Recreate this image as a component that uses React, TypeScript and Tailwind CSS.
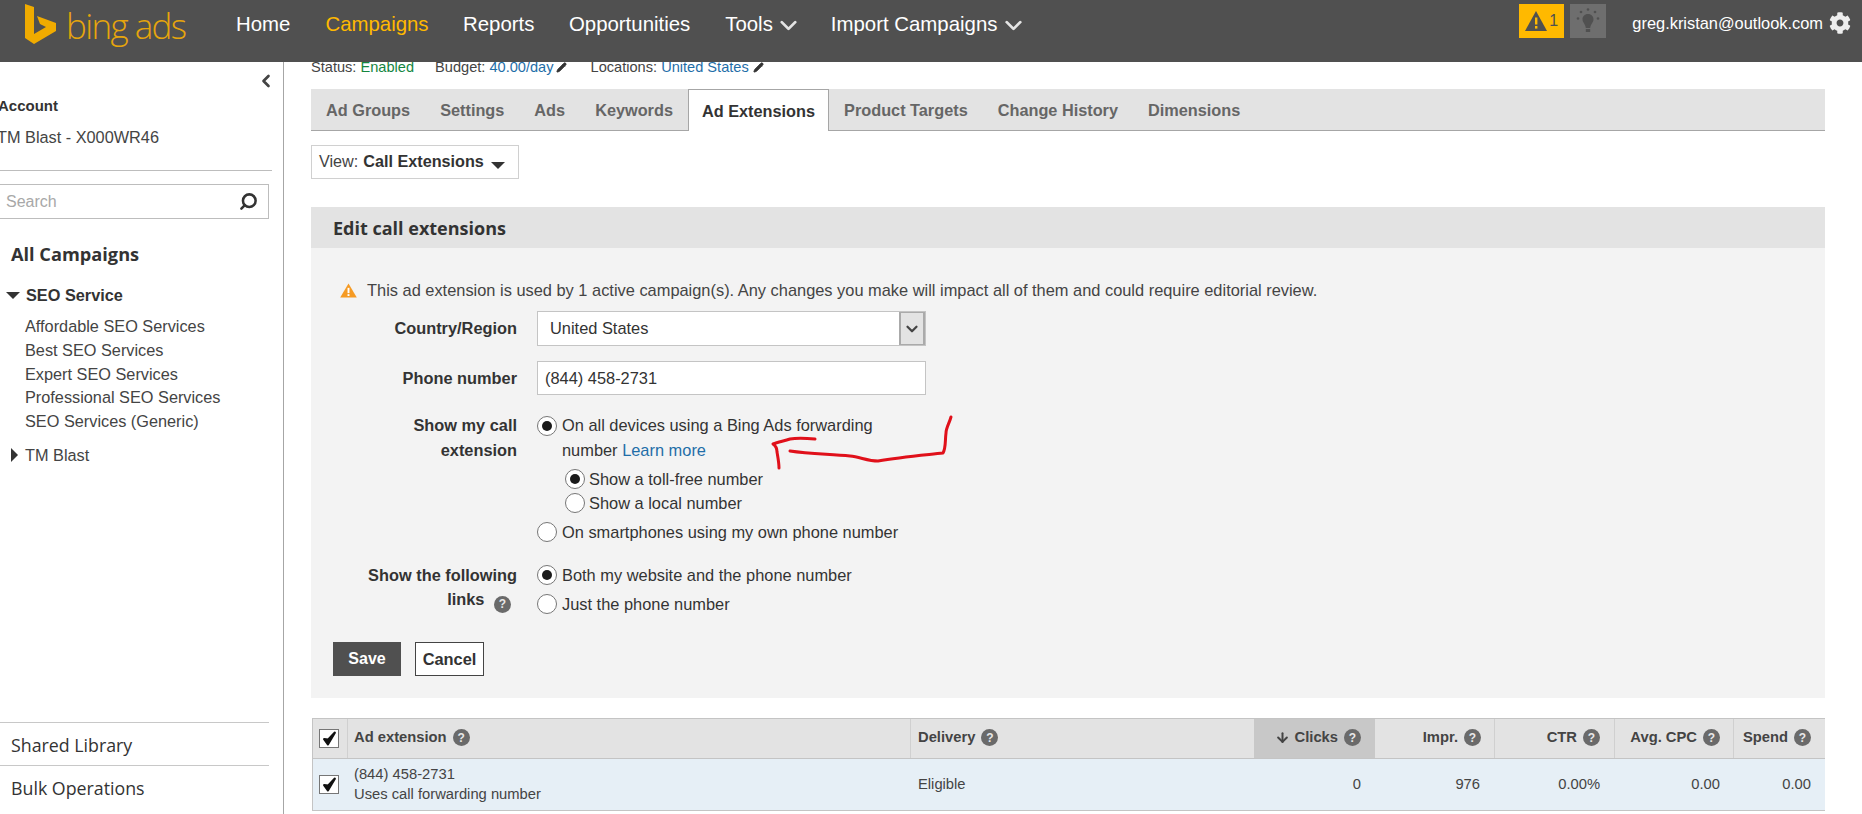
import React from "react";
import { ChevronDown, ChevronLeft, Pencil, Search, ArrowDown } from "lucide-react";
import { FaCog } from "react-icons/fa";

const Help = ({ className = "" }: { className?: string }) => (
  <span className={"inline-flex items-center justify-center w-[17px] h-[17px] rounded-full bg-[#6a6a6a] text-[#e8e8e8] text-[12px] font-bold leading-none " + className}>?</span>
);

const Radio = ({ on }: { on?: boolean }) => (
  <span className="shrink-0 w-[20px] h-[20px] rounded-full border border-[#767676] bg-white flex items-center justify-center">
    {on && <span className="w-[10px] h-[10px] rounded-full bg-[#1a1a1a]" />}
  </span>
);

const Check = () => (
  <span className="w-[20px] h-[19px] border border-[#767676] bg-white flex items-center justify-center">
    <svg width="15" height="15" viewBox="0 0 14 14"><path d="M2 7.5 L5.5 12.5 L12 1.5 L5.8 8 Z" fill="#111" stroke="#111" strokeWidth="2" strokeLinejoin="round" /></svg>
  </span>
);

const tabs = ["Ad Groups", "Settings", "Ads", "Keywords", "Ad Extensions", "Product Targets", "Change History", "Dimensions"];
const campaigns = ["Affordable SEO Services", "Best SEO Services", "Expert SEO Services", "Professional SEO Services", "SEO Services (Generic)"];

const Tri = () => <span className="inline-block w-0 h-0 border-x-[7px] border-x-transparent border-t-[7px] border-t-[#333]" />;

export default function App() {
  return (
    <div className="w-[1862px] h-[814px] overflow-hidden bg-white flex flex-col text-[#333] font-['Liberation_Sans',Arial,sans-serif]">
      {/* top bar */}
      <header className="h-[62px] shrink-0 bg-[#505050] flex items-start relative z-10">
        <div className="flex items-center h-[50px] pl-[24px] w-[236px]">
          <svg width="33" height="42" viewBox="0 0 33 42" className="shrink-0 -mt-[2px]">
            <path d="M1 1 L10 4 V31 L22 24 L16 21 L13 13 L32 20 V28 L10 41 L1 35 Z" fill="#f0ab00" />
          </svg>
          <span className="ml-[9px] text-[#e6a50c] text-[35px] leading-none font-['Open_Sans'] font-light tracking-[-1.6px]">bing ads</span>
        </div>
        <nav className="flex items-center h-[48px] text-[20.4px] text-white">
          <span>Home</span>
          <span className="ml-[35px] text-[#ffb900]">Campaigns</span>
          <span className="ml-[34.5px]">Reports</span>
          <span className="ml-[34.5px]">Opportunities</span>
          <span className="ml-[35px]">Tools</span>
          <ChevronDown className="ml-[2px] mt-[3px] w-[27px] h-[27px]" strokeWidth={2.5} color="#e4e4e4" />
          <span className="ml-[29px]">Import Campaigns</span>
          <ChevronDown className="ml-[3px] mt-[3px] w-[27px] h-[27px]" strokeWidth={2.5} color="#e4e4e4" />
        </nav>
        <div className="ml-auto flex items-start pt-[4px] pr-[11px]">
          <div className="w-[45px] h-[34px] bg-[#ffb900] flex items-center pl-[5px] text-[#505050] text-[16px]">
            <svg width="24" height="22" viewBox="0 0 24 22"><path d="M12 1 L23 21 H1 Z" fill="#505050" /><rect x="11" y="7.5" width="2.4" height="7" fill="#ffb900" /><rect x="11" y="16" width="2.4" height="2.6" fill="#ffb900" /></svg>
            <span className="ml-[1px]">1</span>
          </div>
          <div className="ml-[6px] w-[36px] h-[34px] bg-[#6e6e6e] flex items-center justify-center">
            <svg width="26" height="28" viewBox="0 0 26 28" fill="#505050">
              <path d="M13 7 C9.5 7 7.5 9.6 7.5 12.3 C7.5 15.5 10.3 17 10.8 21 H15.2 C15.7 17 18.5 15.5 18.5 12.3 C18.5 9.6 16.5 7 13 7 Z" />
              <rect x="10.8" y="22" width="4.4" height="3" />
              <circle cx="13" cy="2.5" r="1.3" /><circle cx="6" cy="5" r="1.3" /><circle cx="20" cy="5" r="1.3" /><circle cx="3" cy="11.5" r="1.3" /><circle cx="23" cy="11.5" r="1.3" />
            </svg>
          </div>
          <span className="ml-[26px] text-[16.4px] leading-[38px] h-[38px] -mt-[4px] pt-[4px] text-white whitespace-nowrap">greg.kristan@outlook.com</span>
          <FaCog className="ml-[6px] mt-[8px] w-[22px] h-[22px]" color="#eeeeee" />
        </div>
      </header>

      <div className="flex flex-1 min-h-0">
        {/* sidebar */}
        <aside className="w-[284px] shrink-0 border-r border-[#a6a6a6] flex flex-col overflow-hidden relative">
          <div className="h-[32px] flex justify-end items-center pr-[7px] pt-[6px]">
            <ChevronLeft className="w-[20px] h-[20px]" color="#444" strokeWidth={3.2} />
          </div>
          <div className="mt-[2px] -ml-[2px] text-[15px] font-bold leading-[20px]">Account</div>
          <div className="mt-[11px] -ml-[3px] text-[16.3px] leading-[20px] text-[#444]">TM Blast - X000WR46</div>
          <div className="mt-[23px] w-[272px] border-t border-[#bdbdbd]" />
          <div className="mt-[13px] -ml-[3px] w-[272px] h-[35px] border border-[#bdbdbd] flex items-center justify-between pl-[8px] pr-[10px]">
            <span className="text-[16px] text-[#a8a8a8]">Search</span>
            <Search className="w-[19px] h-[19px] -scale-x-100" color="#333" strokeWidth={3.2} />
          </div>
          <div className="mt-[23px] pl-[11px] text-[18.2px] leading-[24px] font-['Open_Sans'] font-bold">All Campaigns</div>
          <div className="mt-[17px] flex items-center pl-[6px] h-[24px]">
            <span className="inline-block w-0 h-0 border-x-[7px] border-x-transparent border-t-[7px] border-t-[#333]" />
            <span className="ml-[6px] text-[16.3px] font-bold">SEO Service</span>
          </div>
          <ul className="mt-[8px] pl-[25px] text-[16.3px] leading-[23.8px] text-[#444]">
            {campaigns.map((c) => <li key={c}>{c}</li>)}
          </ul>
          <div className="mt-[9px] flex items-center pl-[11px] h-[24px]">
            <span className="inline-block w-0 h-0 border-y-[7px] border-y-transparent border-l-[7px] border-l-[#333]" />
            <span className="ml-[7px] text-[16.3px] text-[#444]">TM Blast</span>
          </div>
          <div className="mt-auto w-[269px] font-['Open_Sans'] text-[17.8px] text-[#333]">
            <div className="h-[43px] border-t border-[#c8c8c8] pl-[11px] pt-[2px] flex items-center">Shared Library</div>
            <div className="h-[49px] border-t border-[#c8c8c8] pl-[11px] pb-[3px] flex items-center">Bulk Operations</div>
          </div>
        </aside>

        {/* main */}
        <main className="ml-[27px] w-[1514px] shrink-0 flex flex-col">
          <div className="h-[27px] overflow-hidden flex items-start text-[14.6px] leading-[10px] text-[#444]">
            <span>Status: <span className="text-[#14863f]">Enabled</span></span>
            <span className="ml-[21px]">Budget: <span className="text-[#1f6ea8]">40.00/day</span></span>
            <Pencil className="ml-[2px] w-[11px] h-[11px]" color="#333" fill="#333" />
            <span className="ml-[24px]">Locations: <span className="text-[#1f6ea8]">United States</span></span>
            <Pencil className="ml-[4px] w-[11px] h-[11px]" color="#333" fill="#333" />
          </div>

          <div className="h-[42px] shrink-0 bg-[#e3e3e3] border-b border-[#a6a6a6] flex items-stretch text-[16.3px] font-bold text-[#666]">
            {tabs.map((t) =>
              t === "Ad Extensions" ? (
                <span key={t} className="px-[13px] pt-[1px] h-[42px] bg-white text-[#333] border border-b-0 border-[#a6a6a6] flex items-center">{t}</span>
              ) : (
                <span key={t} className="px-[15px] pt-[1px] flex items-center">{t}</span>
              )
            )}
          </div>

          <div className="mt-[14px] w-[208px] h-[34px] border border-[#d0d0d0] flex items-center pl-[7px] pb-[1px] text-[16.2px]">
            <span className="text-[#444]">View:</span>
            <span className="ml-[5px] font-bold">Call Extensions</span>
            <span className="ml-[7px] mt-[4px]"><Tri /></span>
          </div>

          <div className="mt-[28px] h-[41px] bg-[#e3e3e3] flex items-center pl-[22px] pt-[1px] text-[18px] font-['Open_Sans'] font-bold">Edit call extensions</div>

          <section className="h-[450px] bg-[#f3f3f3] flex flex-col text-[16.4px] text-[#333]">
            <div className="mt-[32px] ml-[29px] flex items-center h-[20px]">
              <svg width="17" height="15" viewBox="0 0 16 14"><path d="M8 0.5 L15.8 13.5 H0.2 Z" fill="#f59a23" /><rect x="7.1" y="4.5" width="1.8" height="5" fill="#fff" /><rect x="7.1" y="10.4" width="1.8" height="1.8" fill="#fff" /></svg>
              <span className="ml-[10px] text-[#444]">This ad extension is used by 1 active campaign(s). Any changes you make will impact all of them and could require editorial review.</span>
            </div>

            <div className="mt-[11px] flex items-center h-[35px]">
              <span className="w-[206px] text-right font-bold text-[16.35px]">Country/Region</span>
              <div className="ml-[20px] w-[389px] h-[35px] border border-[#c4c4c4] bg-white flex items-center justify-between pl-[12px]">
                <span>United States</span>
                <span className="w-[26px] h-[33px] bg-[#e3e3e3] border-x-2 border-y border-[#aaa] flex items-center justify-center">
                  <ChevronDown className="w-[18px] h-[18px]" color="#444" strokeWidth={3} />
                </span>
              </div>
            </div>

            <div className="mt-[15px] flex items-center h-[34px]">
              <span className="w-[206px] text-right font-bold text-[16.35px] pt-[1px]">Phone number</span>
              <div className="ml-[20px] w-[389px] h-[34px] border border-[#c4c4c4] bg-white flex items-center pl-[7px] pt-[1px]">(844) 458-2731</div>
            </div>

            <div className="mt-[18px] flex">
              <div className="w-[206px] text-right font-bold text-[16.35px] leading-[24.5px]">Show my call<br />extension</div>
              <div className="ml-[20px]">
                <label className="flex items-start leading-[24.5px]">
                  <span className="mt-[3px]"><Radio on /></span>
                  <span className="ml-[5px]">On all devices using a Bing Ads forwarding<br />number <span className="text-[#1f6ea8]">Learn more</span></span>
                </label>
                <label className="mt-[5px] ml-[28px] flex items-center h-[24px]"><Radio on /><span className="ml-[4px]">Show a toll-free number</span></label>
                <label className="ml-[28px] flex items-center h-[24px]"><Radio /><span className="ml-[4px]">Show a local number</span></label>
                <label className="mt-[5px] flex items-center h-[24px]"><Radio /><span className="ml-[5px]">On smartphones using my own phone number</span></label>
              </div>
            </div>

            <div className="mt-[19px] flex">
              <div className="w-[206px] text-right font-bold text-[16.35px] leading-[24px]">
                Show the following<br />links <Help className="ml-[5px] mr-[6px] align-[-3px]" />
              </div>
              <div className="ml-[20px]">
                <label className="flex items-center h-[24px]"><Radio on /><span className="ml-[5px]">Both my website and the phone number</span></label>
                <label className="mt-[5px] flex items-center h-[24px]"><Radio /><span className="ml-[5px]">Just the phone number</span></label>
              </div>
            </div>

            <div className="mt-[26px] ml-[22px] flex gap-[14px]">
              <button className="w-[68px] h-[34px] bg-[#505050] text-white font-bold text-[16px]">Save</button>
              <button className="w-[69px] h-[34px] bg-white border border-[#444] font-bold text-[16.4px]">Cancel</button>
            </div>
          </section>

          <div className="mt-[20px] ml-[1px] w-[1513px] border-l border-t border-[#c4c4c4] text-[14.75px]">
            <div className="h-[40px] flex bg-[#e3e3e3] border-b border-[#c4c4c4] font-bold text-[#444]">
              <div className="w-[35px] border-r border-[#d0d0d0] flex items-center pl-[6px]"><Check /></div>
              <div className="w-[563px] border-r border-[#d0d0d0] flex items-center pl-[6px] pb-[2px]">Ad extension<Help className="ml-[6px]" /></div>
              <div className="w-[343px] flex items-center pl-[7px] pb-[2px]">Delivery<Help className="ml-[6px]" /></div>
              <div className="w-[121px] bg-[#c8c8c8] flex items-center justify-end pr-[14px] pb-[2px]">
                <ArrowDown className="w-[15px] h-[15px] mr-[5px]" strokeWidth={3.2} />Clicks<Help className="ml-[6px]" />
              </div>
              <div className="w-[120px] border-r border-[#d0d0d0] flex items-center justify-end pr-[13px] pb-[2px]">Impr.<Help className="ml-[6px]" /></div>
              <div className="w-[120px] border-r border-[#d0d0d0] flex items-center justify-end pr-[14px] pb-[2px]">CTR<Help className="ml-[6px]" /></div>
              <div className="w-[119px] border-r border-[#d0d0d0] flex items-center justify-end pr-[13px] pb-[2px]">Avg. CPC<Help className="ml-[6px]" /></div>
              <div className="w-[91px] flex items-center justify-end pr-[14px] pb-[2px]">Spend<Help className="ml-[6px]" /></div>
            </div>
            <div className="h-[52px] flex bg-[#e6eff6] border-b border-[#c4c4c4] text-[#444]">
              <div className="w-[35px] flex items-center pl-[6px]"><Check /></div>
              <div className="w-[563px] pl-[6px] pt-[5px] leading-[20px]">(844) 458-2731<br />Uses call forwarding number</div>
              <div className="w-[343px] flex items-center pl-[7px]">Eligible</div>
              <div className="w-[121px] flex items-center justify-end pr-[14px]">0</div>
              <div className="w-[120px] flex items-center justify-end pr-[15px]">976</div>
              <div className="w-[120px] flex items-center justify-end pr-[15px]">0.00%</div>
              <div className="w-[119px] flex items-center justify-end pr-[14px]">0.00</div>
              <div className="w-[91px] flex items-center justify-end pr-[14px]">0.00</div>
            </div>
          </div>
        </main>
      </div>

      {/* red hand-drawn annotation over the form */}
      <svg className="absolute left-[760px] top-[410px] pointer-events-none" width="200" height="70" viewBox="760 410 200 70" fill="none" stroke="#e0101a" strokeWidth="3" strokeLinecap="round" strokeLinejoin="round">
        <path d="M951 417 C949 424 946 428 946 433 C945 440 946 448 943 453 C925 455 900 457 878 461 C868 461 860 457 850 456 C830 454 810 454 790 451" />
        <path d="M815 439 C805 438 795 438 790 439 C784 441 778 442 773 444 C776 446 777 448 777 452 C778 458 779 463 779 468" />
      </svg>
    </div>
  );
}
